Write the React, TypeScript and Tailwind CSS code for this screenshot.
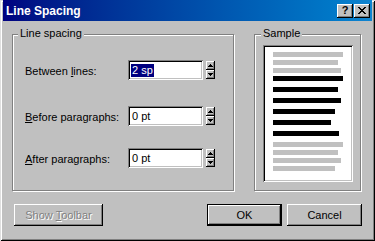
import React from "react";

const raised =
  "shadow-[inset_-1px_-1px_#000000,inset_1px_1px_#ffffff,inset_-2px_-2px_#808080]";
const sunken =
  "shadow-[inset_1px_1px_#808080,inset_-1px_-1px_#ffffff,inset_2px_2px_#000000,inset_-2px_-2px_#c0c0c0]";
const etched = "border border-[#808080] shadow-[inset_1px_1px_#ffffff,1px_1px_#ffffff]";

function Arrow({ up }: { up: boolean }) {
  return (
    <svg width="5" height="3" viewBox="0 0 5 3" shapeRendering="crispEdges">
      {up ? (
        <>
          <rect x="2" y="0" width="1" height="1" fill="#000" />
          <rect x="1" y="1" width="3" height="1" fill="#000" />
          <rect x="0" y="2" width="5" height="1" fill="#000" />
        </>
      ) : (
        <>
          <rect x="0" y="0" width="5" height="1" fill="#000" />
          <rect x="1" y="1" width="3" height="1" fill="#000" />
          <rect x="2" y="2" width="1" height="1" fill="#000" />
        </>
      )}
    </svg>
  );
}

function Spinner() {
  return (
    <div className="ml-[3px] flex flex-col w-[9px] h-[18px]">
      <div className={`h-[9px] bg-[#c0c0c0] ${raised} flex items-center justify-center`}>
        <Arrow up={true} />
      </div>
      <div className={`h-[9px] bg-[#c0c0c0] ${raised} flex items-center justify-center`}>
        <Arrow up={false} />
      </div>
    </div>
  );
}

function Field({ children }: { children: React.ReactNode }) {
  return (
    <div className={`w-[75px] h-[20px] bg-white ${sunken} flex items-center pl-[3px] text-black`}>
      {children}
    </div>
  );
}

function Row({
  label,
  value,
  selected,
  className,
}: {
  label: React.ReactNode;
  value: string;
  selected?: boolean;
  className?: string;
}) {
  return (
    <div className={`flex items-center h-[20px] ${className ?? ""}`}>
      <div className="w-[115px] pl-[12px] pt-[3px] leading-[13px]">{label}</div>
      <Field>
        {selected ? (
          <span className="bg-[#000080] text-white leading-[13px] px-[1px]">{value}</span>
        ) : (
          <span className="leading-[13px] pl-[1px]">{value}</span>
        )}
      </Field>
      <Spinner />
    </div>
  );
}

const sample: { w: number; c: string; mt: number }[] = [
  { w: 70, c: "bg-[#c0c0c0]", mt: 0 },
  { w: 65, c: "bg-[#c0c0c0]", mt: 3 },
  { w: 68, c: "bg-[#c0c0c0]", mt: 3 },
  { w: 70, c: "bg-black", mt: 3 },
  { w: 65, c: "bg-black", mt: 6 },
  { w: 68, c: "bg-black", mt: 6 },
  { w: 62, c: "bg-black", mt: 6 },
  { w: 58, c: "bg-black", mt: 6 },
  { w: 66, c: "bg-black", mt: 6 },
  { w: 70, c: "bg-[#c0c0c0]", mt: 6 },
  { w: 65, c: "bg-[#c0c0c0]", mt: 3 },
  { w: 68, c: "bg-[#c0c0c0]", mt: 3 },
  { w: 62, c: "bg-[#c0c0c0]", mt: 3 },
];

export default function App() {
  return (
    <div
      className="w-[375px] h-[241px] bg-[#c0c0c0] text-[11px] text-black flex flex-col shadow-[inset_1px_1px_#dfdfdf,inset_-1px_-1px_#000000,inset_2px_2px_#ffffff,inset_-2px_-2px_#808080]"
      style={{ fontFamily: '"Liberation Sans", Arial, sans-serif' }}
    >
      {/* Title bar */}
      <div className="mx-[3px] h-[21px] bg-linear-to-r from-[#000080] to-[#1084d0] flex items-center pl-[3px] pr-[2px]">
        <div className="text-white font-bold text-[12px] leading-[14px] flex-1">Line Spacing</div>
        <div className="flex gap-[1px]">
          <div className={`w-[16px] h-[14px] bg-[#c0c0c0] ${raised} flex items-center justify-center`}>
            <span className="font-bold text-[11px] leading-[11px] text-black -mt-[1px]">?</span>
          </div>
          <div className={`w-[16px] h-[14px] bg-[#c0c0c0] ${raised} flex items-center justify-center`}>
            <svg width="8" height="7" viewBox="0 0 8 7" shapeRendering="crispEdges">
              <path
                d="M0 0h2v1h-2zM6 0h2v1h-2zM1 1h2v1h-2zM5 1h2v1h-2zM2 2h4v1h-4zM3 3h2v1h-2zM2 4h4v1h-4zM1 5h2v1h-2zM5 5h2v1h-2zM0 6h2v1h-2zM6 6h2v1h-2z"
                fill="#000"
              />
            </svg>
          </div>
        </div>
      </div>

      {/* Groups */}
      <div className="flex mt-[13px] pl-[12px] gap-[20px]">
        <div className={`relative w-[222px] h-[157px] ${etched} pt-[25px]`}>
          <span className="absolute left-[5px] -top-[8px] px-[2px] bg-[#c0c0c0] leading-[13px]">
            Line spacing
          </span>
          <Row
            label={
              <>
                Between <span className="underline underline-offset-[1px]">l</span>ines:
              </>
            }
            value="2 sp"
            selected
          />
          <Row
            className="mt-[26px]"
            label={
              <>
                <span className="underline underline-offset-[1px]">B</span>efore paragraphs:
              </>
            }
            value="0 pt"
          />
          <Row
            className="mt-[22px]"
            label={
              <>
                <span className="underline underline-offset-[1px]">A</span>fter paragraphs:
              </>
            }
            value="0 pt"
          />
        </div>

        <div className={`relative w-[107px] h-[157px] ${etched} pl-[8px] pt-[10px]`}>
          <span className="absolute left-[6px] -top-[8px] px-[2px] bg-[#c0c0c0] leading-[13px]">
            Sample
          </span>
          <div className={`w-[90px] h-[137px] bg-white ${sunken} pl-[10px] pt-[7px] flex flex-col`}>
            {sample.map((s, i) => (
              <div
                key={i}
                className={`h-[5px] ${s.c}`}
                style={{ width: s.w, marginTop: s.mt }}
              />
            ))}
          </div>
        </div>
      </div>

      {/* Buttons */}
      <div className="flex mt-[13px] pl-[14px]">
        <div className={`w-[89px] h-[22px] ${raised} flex items-center justify-center text-[#808080] [text-shadow:1px_1px_0_#ffffff]`}>
          <span>
            Show <span className="underline underline-offset-[1px]">T</span>oolbar
          </span>
        </div>
        <div className="ml-[104px] w-[75px] h-[22px] shadow-[inset_0_0_0_1px_#000000,inset_-2px_-2px_#000000,inset_2px_2px_#ffffff,inset_-3px_-3px_#808080] flex items-center justify-center">
          OK
        </div>
        <div className={`ml-[5px] w-[75px] h-[22px] ${raised} flex items-center justify-center`}>
          Cancel
        </div>
      </div>
    </div>
  );
}
